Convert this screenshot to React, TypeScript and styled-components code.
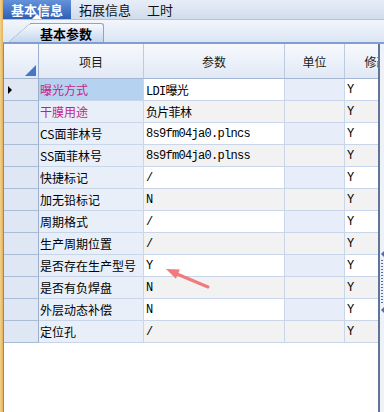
import React from 'react';
import styled, { createGlobalStyle, css } from 'styled-components';

const cjk = `"Noto Sans CJK SC", "Noto Sans", sans-serif`;
const mono = `"Liberation Mono", "Noto Sans CJK SC", monospace`;

const GlobalStyle = createGlobalStyle`
  html, body {
    margin: 0;
    padding: 0;
    background: #fff;
  }
  body {
    font-family: ${cjk};
  }
`;

const Page = styled.div`
  width: 384px;
  height: 412px;
  display: flex;
  overflow: hidden;
  background: #fff;
`;

const EdgeStrip = styled.div`
  width: 3px;
  flex-shrink: 0;
  background: linear-gradient(90deg, #f4d38a, #e0b25c);
`;

const Main = styled.div`
  flex: 1;
  min-width: 0;
  display: flex;
  flex-direction: column;
`;

const TabBar = styled.div`
  height: 19px;
  display: flex;
  background: linear-gradient(#e8eef8, #d0dcec);
  border-bottom: 1px solid #b3c3d9;
`;

const TopTab = styled.div<{ $active?: boolean }>`
  position: relative;
  display: flex;
  align-items: center;
  padding: 0 8px;
  font-size: 13px;
  line-height: 1;
  color: #111;

  ${(p) =>
    p.$active &&
    css`
      background: linear-gradient(#6593da, #2d5fb5);
      color: #fff;
      font-weight: bold;

      &::after {
        content: '';
        position: absolute;
        left: 50%;
        bottom: 0;
        margin-left: -5px;
        border-left: 5px solid transparent;
        border-right: 5px solid transparent;
        border-bottom: 5px solid #fff;
      }
    `}
`;

const SubBar = styled.div`
  height: 22px;
  display: flex;
  align-items: flex-end;
  padding-left: 27px;
  background: linear-gradient(#f2f6fb, #dbe5f2);
`;

const SubTab = styled.div`
  position: relative;
  z-index: 0;
  height: 18px;
  display: flex;
  align-items: center;
  padding: 0 11px 0 9px;
  border: 1px solid #8ea4c4;
  border-bottom: none;
  border-top-right-radius: 3px;
  background: linear-gradient(#f8fafd, #c4d6ef);
  font-size: 13px;
  font-weight: bold;
  line-height: 1;
  color: #000;

  &::before {
    content: '';
    position: absolute;
    z-index: -1;
    left: -23px;
    top: -1px;
    bottom: 0;
    width: 32px;
    border-left: 1px solid #8ea4c4;
    border-top: 1px solid #8ea4c4;
    border-top-left-radius: 3px;
    background: linear-gradient(#f8fafd, #c4d6ef);
    transform: skewX(-49deg);
    transform-origin: bottom left;
  }
`;

const Body = styled.div`
  flex: 1;
  min-height: 0;
  display: flex;
  border-top: 2px solid #7f9fd4;
`;

const GridWrap = styled.div`
  position: relative;
  flex: 1;
  min-width: 0;
  overflow: hidden;
  border-left: 1px solid #7d8ca4;
  background: #fff;
`;

const Table = styled.div`
  display: grid;
  grid-template-columns: 35px 105px 141px 60px 64px;
  width: max-content;
`;

const HeaderCell = styled.div`
  height: 35px;
  box-sizing: border-box;
  display: flex;
  align-items: center;
  justify-content: center;
  background: linear-gradient(#f7f9fd, #e1e9f5);
  border-right: 1px solid #bccbe0;
  border-bottom: 1px solid #a3b7d4;
  font-family: ${cjk};
  font-size: 12px;
  color: #1a1a1a;
`;

const CornerCell = styled(HeaderCell)`
  align-items: flex-end;
  justify-content: flex-end;
  padding: 0 2px 2px 0;
  border-right-color: #9bb0cf;
`;

const CornerMark = styled.div`
  width: 0;
  height: 0;
  border-left: 11px solid transparent;
  border-bottom: 11px solid #4676c6;
`;

const BaseCell = styled.div`
  height: 22px;
  box-sizing: border-box;
  display: flex;
  align-items: center;
  overflow: hidden;
  white-space: nowrap;
  border-right: 1px solid #c9d6e9;
  border-bottom: 1px solid #c9d6e9;
  color: #000;
`;

const RowHead = styled(BaseCell)`
  padding-left: 4px;
  background: #dee7f3;
  border-right-color: #9bb0cf;
  border-bottom-color: #aabcd5;
`;

const RowPointer = styled.div`
  width: 0;
  height: 0;
  border-left: 4px solid #000;
  border-top: 4px solid transparent;
  border-bottom: 4px solid transparent;
`;

const NameCell = styled(BaseCell)<{ $selected?: boolean; $pink?: boolean }>`
  padding-left: 1px;
  font-family: ${cjk};
  font-size: 12px;
  background: ${(p) => (p.$selected ? '#b6d2f1' : '#e9eff8')};
  color: ${(p) => (p.$pink ? '#c21e88' : '#000')};
`;

const ValueCell = styled(BaseCell)<{ $alt?: boolean }>`
  padding-left: 2px;
  font-family: ${mono};
  font-size: 12px;
  letter-spacing: -0.7px;
  background: ${(p) => (p.$alt ? '#f2f2f2' : '#fff')};
`;

const UnitCell = styled(BaseCell)<{ $alt?: boolean }>`
  background: ${(p) => (p.$alt ? '#f2f2f2' : '#e7eef9')};
`;

const FlagCell = styled(ValueCell)``;

const Splitter = styled.div`
  width: 4px;
  flex-shrink: 0;
  display: flex;
  flex-direction: column;
  align-items: flex-end;
  gap: 3px;
  padding-top: 207px;
  border-left: 2px solid #5f7497;
  background: #eef1f6;
`;

const SplitArrow = styled.div`
  width: 0;
  height: 0;
  border-top: 3px solid transparent;
  border-bottom: 3px solid transparent;
  border-right: 3px solid #4d6ea8;
`;

const SplitDots = styled.div`
  width: 2px;
  height: 44px;
  margin-right: 1px;
  background: repeating-linear-gradient(#4d6ea8 0 1px, transparent 1px 3px);
`;

const Annotation = styled.svg`
  position: absolute;
  left: 156px;
  top: 220px;
  pointer-events: none;
`;

interface ParamRow {
  name: string;
  value: string;
  flag: string;
  pink?: boolean;
}

const rows: ParamRow[] = [
  { name: '曝光方式', value: 'LDI曝光', flag: 'Y', pink: true },
  { name: '干膜用途', value: '负片菲林', flag: 'Y', pink: true },
  { name: 'CS面菲林号', value: '8s9fm04ja0.plncs', flag: 'Y' },
  { name: 'SS面菲林号', value: '8s9fm04ja0.plnss', flag: 'Y' },
  { name: '快捷标记', value: '/', flag: 'Y' },
  { name: '加无铅标记', value: 'N', flag: 'Y' },
  { name: '周期格式', value: '/', flag: 'Y' },
  { name: '生产周期位置', value: '/', flag: 'Y' },
  { name: '是否存在生产型号', value: 'Y', flag: 'Y' },
  { name: '是否有负焊盘', value: 'N', flag: 'Y' },
  { name: '外层动态补偿', value: 'N', flag: 'Y' },
  { name: '定位孔', value: '/', flag: 'Y' },
];

const App: React.FunctionComponent = () => (
  <Page>
    <GlobalStyle />
    <EdgeStrip />
    <Main>
      <TabBar>
        <TopTab $active>基本信息</TopTab>
        <TopTab>拓展信息</TopTab>
        <TopTab>工时</TopTab>
      </TabBar>
      <SubBar>
        <SubTab>基本参数</SubTab>
      </SubBar>
      <Body>
        <GridWrap>
          <Table>
            <CornerCell>
              <CornerMark />
            </CornerCell>
            <HeaderCell>项目</HeaderCell>
            <HeaderCell>参数</HeaderCell>
            <HeaderCell>单位</HeaderCell>
            <HeaderCell>修改</HeaderCell>
            {rows.map((row, i) => {
              const alt = i % 2 === 1;
              return (
                <React.Fragment key={row.name}>
                  <RowHead>{i === 0 && <RowPointer />}</RowHead>
                  <NameCell $selected={i === 0} $pink={row.pink}>
                    {row.name}
                  </NameCell>
                  <ValueCell $alt={alt}>{row.value}</ValueCell>
                  <UnitCell $alt={alt} />
                  <FlagCell $alt={alt}>{row.flag}</FlagCell>
                </React.Fragment>
              );
            })}
          </Table>
          <Annotation width="60" height="30" viewBox="0 0 60 30">
            <line x1="17" y1="10" x2="48" y2="23" stroke="#f07a7c" strokeWidth="3" strokeLinecap="round" />
            <polygon points="6,5 15.9,14.7 19.9,5.5" fill="#f07a7c" />
          </Annotation>
        </GridWrap>
        <Splitter>
          <SplitArrow />
          <SplitDots />
          <SplitArrow />
        </Splitter>
      </Body>
    </Main>
  </Page>
);

export default App;
